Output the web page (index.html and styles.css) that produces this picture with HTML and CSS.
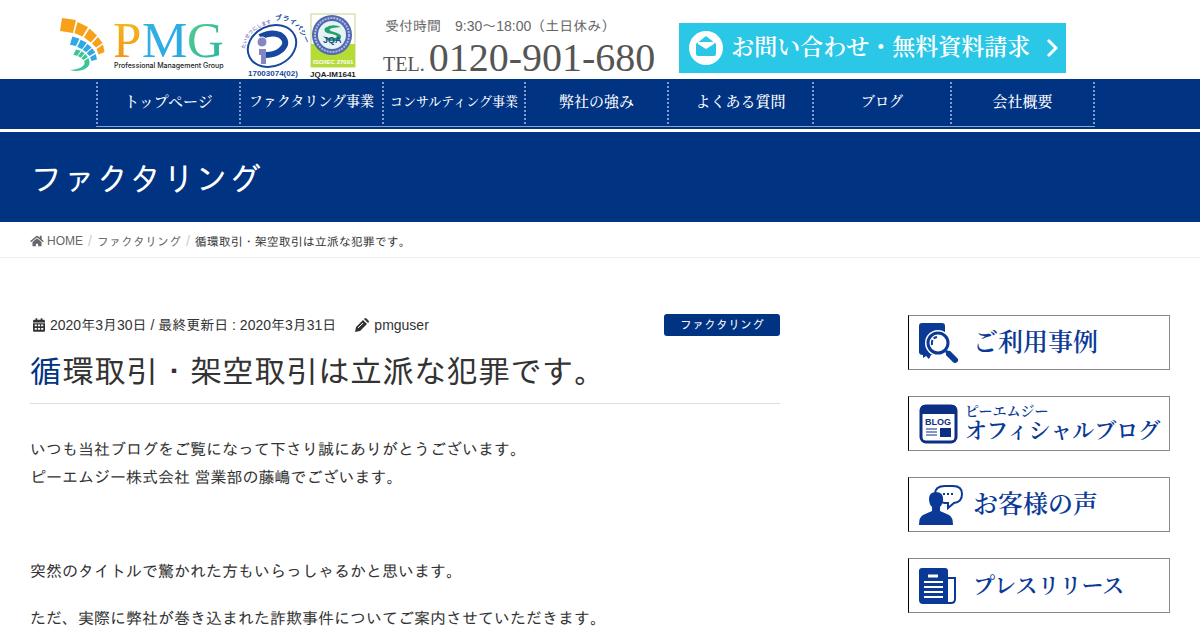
FILE: index.html
```html
<!DOCTYPE html>
<html lang="ja">
<head>
    <meta charset="UTF-8">
    <meta name="viewport" content="width=device-width, initial-scale=1">
    <title>循環取引・架空取引は立派な犯罪です。</title>
    <link rel="stylesheet" href="styles.css">
</head>
<body>
    <header class="site-header">
        <a class="logo" href="#" aria-label="PMG">
            <svg width="168" height="62" viewBox="58 14 168 62">
                <defs>
                    <linearGradient id="pGrad" x1="0" y1="0" x2="0" y2="1">
                        <stop offset="0" stop-color="#f3c21c"/>
                        <stop offset="1" stop-color="#f08c1e"/>
                    </linearGradient>
                    <linearGradient id="mGrad" x1="0" y1="0" x2="1" y2="1">
                        <stop offset="0" stop-color="#35b4e0"/>
                        <stop offset="1" stop-color="#2aa5e6"/>
                    </linearGradient>
                    <linearGradient id="gGrad" x1="0" y1="0" x2="1" y2="1">
                        <stop offset="0" stop-color="#5cd08c"/>
                        <stop offset="1" stop-color="#22b0a8"/>
                    </linearGradient>
                </defs>
                <g fill="#f7a11a">
                    <path d="M62 18L76 20L73 33L60 31Z"/>
                    <path d="M77.500 22L88 27L82.500 36.500L74.500 33Z"/>
                    <path d="M89.500 28.500L97 35.500L90.700 42.500L84 37.300Z"/>
                    <path d="M98 37L102.500 43L96 47.500L92 43.500Z"/>
                    <path d="M103 44.500L104.500 52L98.500 54.500L96.700 49Z"/>
                </g>
                <g fill="#2fa8e4">
                    <path d="M72.300 36.500L79.500 38.700L76 46L70 44.700Z"/>
                    <path d="M80.700 39.700L86.700 42.700L82 49.300L77.300 46.700Z"/>
                    <path d="M87.500 44L91.500 47.500L86 52.300L82.700 49.700Z"/>
                    <path d="M92 48.300L95.300 52.500L89.500 56L86.700 53.200Z"/>
                    <path d="M95.700 54L97 59.500L91.500 61L90 57.300Z"/>
                </g>
                <g fill="#3cc49a">
                    <path d="M76 49.500L80.700 50.700L77.300 55.700L73.300 55Z"/>
                    <path d="M81.700 51.300L84.700 53.300L80.700 57.700L78 56Z"/>
                    <path d="M85.500 54L87.800 57L83.500 60L81.300 58.200Z"/>
                    <path d="M84 61L88.500 58Q92 66 84 69.500Q77 72 70 70Q80 69 83 66Q85.500 63.500 84 61Z"/>
                </g>
                <g class="logo-letters">
                    <text x="113" y="57" fill="url(#pGrad)">P</text>
                    <text x="142" y="57" fill="url(#mGrad)">M</text>
                    <text x="187" y="57" fill="url(#gGrad)">G</text>
                </g>
                <text class="logo-sub" x="114" y="68">Professional Management Group</text>
            </svg>
        </a>

        <svg class="badges" width="118" height="68" viewBox="240 10 118 68">
            <path id="arcLeft" d="M245 49Q247 28 276 22" fill="none"/>
            <path id="arcRight" d="M275 21Q294 16 305 43" fill="none"/>
            <text class="arc-left"><textPath href="#arcLeft">たいせつにします</textPath></text>
            <text class="arc-right"><textPath href="#arcRight">プライバシー</textPath></text>
            <ellipse cx="272" cy="46" rx="25" ry="20" transform="rotate(-25 272 46)" fill="#fff" stroke="#17479e" stroke-width="2"/>
            <path d="M260 37Q271 31 280 35Q290 42 281 50Q275 55 266 55" fill="none" stroke="#17479e" stroke-width="6"/>
            <circle cx="262" cy="42" r="5" fill="#8585c6" stroke="#fff"/>
            <path d="M259 49H266V64H261V55H259Z" fill="#8585c6"/>
            <text class="badge-no" x="248" y="76">17003074(02)</text>

            <rect x="311" y="14" width="44" height="53" fill="#fff" stroke="#c4d68a"/>
            <path d="M311 44H355V67H311Z" fill="#b5dc35"/>
            <circle cx="332" cy="35" r="20" fill="#5068b0"/>
            <circle cx="332" cy="35" r="17" fill="none" stroke="#aebbe0" stroke-width="2" stroke-dasharray="2 1"/>
            <circle cx="332" cy="35" r="14" fill="#e6f3f5"/>
            <path d="M341 27Q332 23 325 28Q322 33 332 34Q340 36 335 38Q330 39 323 36Q329 44 339 40Q345 35 334 32Q326 30 332 28Z" fill="#22a06e"/>
            <text class="jqa" x="323" y="43">JQA</text>
            <text class="iso" x="313" y="64">ISO/IEC 27001</text>
            <text class="jqa-no" x="310" y="77">JQA-IM1641</text>
        </svg>

        <div class="tel">
            <p class="tel-hours">受付時間　9:30〜18:00（土日休み）</p>
            <p class="tel-number"><span>TEL.</span>0120-901-680</p>
        </div>

        <a class="contact" href="#">
            <svg width="34" height="34" viewBox="0 0 34 34">
                <circle cx="17" cy="17" r="17" fill="#fff"/>
                <path d="M7 13L17 5L27 13V23Q27 25 25 25H9Q7 25 7 23Z" fill="#2bc7e6"/>
                <path d="M9 11H25V13L17 18L9 13Z" fill="#fff"/>
            </svg>
            <span>お問い合わせ・無料資料請求</span>
            <svg class="arrow" width="12" height="20" viewBox="0 0 12 20">
                <path d="M2 2L10 10L2 18" fill="none" stroke="#fff" stroke-width="3"/>
            </svg>
        </a>
    </header>

    <nav class="global-nav">
        <ul>
            <li><a href="#">トップページ</a></li>
            <li><a class="medium" href="#">ファクタリング事業</a></li>
            <li><a class="small" href="#">コンサルティング事業</a></li>
            <li><a href="#">弊社の強み</a></li>
            <li><a href="#">よくある質問</a></li>
            <li><a class="medium" href="#">ブログ</a></li>
            <li><a href="#">会社概要</a></li>
        </ul>
    </nav>

    <div class="page-header">ファクタリング</div>

    <ol class="breadcrumb">
        <li>
            <a href="#"><svg width="14" height="12" viewBox="0 0 576 512" fill="currentColor"><path d="M280 148L96 300v164c0 9 7 16 16 16h112c9 0 16-7 16-16v-96h96v96c0 9 7 16 16 16h112c9 0 16-7 16-16V300L296 148a12 12 0 0 0-16 0zM572 251l-84-69V44c0-7-5-12-12-12h-56c-7 0-12 5-12 12v73l-90-74a48 48 0 0 0-61 0L4 251c-5 4-5 12-1 17l25 31c5 5 12 6 17 2L280 107c5-3 11-3 16 0l235 194c5 4 13 3 17-2l26-31c4-5 3-13-2-17z"/></svg>HOME</a>
        </li>
        <li><a href="#">ファクタリング</a></li>
        <li>循環取引・架空取引は立派な犯罪です。</li>
    </ol>

    <div class="container">
        <main>
            <div class="entry-meta">
                <svg width="12" height="14" viewBox="0 0 448 512" fill="currentColor"><path fill-rule="evenodd" d="M0 160V112c0-26 22-48 48-48h48V12c0-7 5-12 12-12h40c7 0 12 5 12 12v52h128V12c0-7 5-12 12-12h40c7 0 12 5 12 12v52h48c26 0 48 22 48 48v48zM0 192h448v272c0 26-22 48-48 48H48c-26 0-48-22-48-48zM64 240v64h80v-64zM184 240v64h80v-64zM304 240v64h80v-64zM64 368v64h80v-64zM184 368v64h80v-64zM304 368v64h80v-64z"/></svg>
                <span class="date">2020年3月30日 / 最終更新日 : 2020年3月31日</span>
                <svg width="14" height="14" viewBox="0 0 14 14" fill="currentColor"><path d="M0 14L1 9L8 2L12 6L5 13ZM9 1L10 0Q11 0 12 1L13 2Q14 3 14 4L13 5Z"/><path d="M3 10L8 5" stroke="#fff"/></svg>
                <span>pmguser</span>
                <a class="category" href="#">ファクタリング</a>
            </div>
            <h1>循環取引・架空取引は立派な犯罪です。</h1>
            <p>いつも当社ブログをご覧になって下さり誠にありがとうございます。<br>ピーエムジー株式会社 営業部の藤嶋でございます。</p>
            <p>&nbsp;</p>
            <p>突然のタイトルで驚かれた方もいらっしゃるかと思います。</p>
            <p>ただ、実際に弊社が巻き込まれた詐欺事件についてご案内させていただきます。</p>
        </main>

        <aside>
            <a class="banner" href="#">
                <svg width="46" height="40" viewBox="0 0 46 40">
                    <path d="M3 0H23Q26 0 26 3V30L12 32L10 36L7 33L4 35V32Q0 32 0 29V3Q0 0 3 0Z" fill="#0a3a96"/>
                    <circle cx="19" cy="20" r="13" fill="#fff"/>
                    <circle cx="19" cy="20" r="10" fill="#fff" stroke="#0a3a96" stroke-width="3"/>
                    <path d="M13 22Q12 15 18 14" fill="none" stroke="#0a3a96" stroke-width="2" stroke-dasharray="5 2"/>
                    <path d="M27 28L30 31" stroke="#0a3a96" stroke-width="3"/>
                    <path d="M30 31L36 37" stroke="#0a3a96" stroke-width="6" stroke-linecap="round"/>
                </svg>
                <span class="banner-text">ご利用事例</span>
            </a>
            <a class="banner" href="#">
                <svg width="38" height="40" viewBox="0 0 38 40">
                    <rect x="2" y="2" width="35" height="36" rx="5" fill="#fff" stroke="#0a2f84" stroke-width="3"/>
                    <path d="M1 10V6Q1 1 6 1H33Q38 1 38 6V10Z" fill="#0a2f84"/>
                    <text class="blog-label" x="6" y="21">BLOG</text>
                    <path d="M7 25H18M7 28H18M7 31H18" stroke="#0a2f84" stroke-width="1"/>
                    <rect x="21" y="24" width="11" height="9" fill="#0a2f84"/>
                </svg>
                <span class="banner-text blog"><small>ピーエムジー</small>オフィシャルブログ</span>
            </a>
            <a class="banner" href="#">
                <svg width="46" height="40" viewBox="0 0 46 40">
                    <path d="M26 1H34Q43 1 43 9Q43 17 35 18L29 23V18H26Q16 17 16 9Q16 1 26 1Z" fill="#fff" stroke="#0a3a96" stroke-width="2"/>
                    <path d="M24 9H36" stroke="#0a3a96" stroke-width="2" stroke-dasharray="2 2"/>
                    <path d="M17 7Q25 7 24 16Q23 20 21 22V26L30 30Q34 32 34 40H0Q0 32 4 30L13 26V22Q10 19 10 14Q10 7 17 7Z" fill="#0a3a96"/>
                </svg>
                <span class="banner-text">お客様の声</span>
            </a>
            <a class="banner" href="#">
                <svg width="46" height="38" viewBox="0 0 46 38">
                    <path d="M27 11H36V32Q36 36 32 36H24" fill="#fff" stroke="#0a3a96" stroke-width="2"/>
                    <path d="M3 1H26Q29 1 29 4V34Q29 37 32 37H4Q0 37 0 33V4Q0 1 3 1Z" fill="#0a3a96"/>
                    <path d="M9 9H19" stroke="#fff" stroke-width="3"/>
                    <path d="M5 15H24M5 20H24M5 25H24M5 30H24" stroke="#fff" stroke-width="2"/>
                </svg>
                <span class="banner-text press">プレスリリース</span>
            </a>
        </aside>
    </div>
</body>
</html>
```
FILE: styles.css
```css
* {
    box-sizing: border-box;
}

body {
    margin: 0;
    font-family: "Liberation Sans", IPAGothic, "Noto Sans CJK JP", sans-serif;
    font-size: 16px;
    line-height: 28px;
    color: #333;
    background: #fff;
}

a {
    color: inherit;
    text-decoration: none;
}

svg {
    flex-shrink: 0;
    overflow: visible;
}

/* header */
.site-header {
    display: flex;
    align-items: flex-end;
    padding: 10px 58px 0;
}

.logo {
    display: flex;
    margin: 0 14px 3px 0;
}

.logo-letters {
    font: 51px "Liberation Serif", serif;
}

.logo-sub {
    font: 500 7px Inter, sans-serif;
    fill: #222;
}

.badges {
    margin: 0 25px 1px 0;
}

.arc-left {
    font-size: 5px;
    font-weight: 700;
    fill: #8a7fc4;
}

.arc-right {
    font-size: 7px;
    font-weight: 700;
    fill: #17479e;
}

.badge-no {
    font-size: 8px;
    font-weight: 700;
    fill: #17479e;
}

.jqa {
    font-size: 9px;
    font-weight: 700;
    fill: #27468f;
}

.iso {
    font-size: 6px;
    font-weight: 700;
    fill: #fff;
}

.jqa-no {
    font-size: 8px;
    font-weight: 700;
    fill: #222;
}

.tel {
    color: #555;
    white-space: nowrap;
}

.tel p {
    margin: 0;
}

.tel-hours {
    padding-left: 2px;
    font-size: 14px;
    line-height: 22px;
    color: #666;
}

.tel-number {
    font-family: "Liberation Serif", serif;
    font-size: 40px;
    line-height: 42px;
}

.tel-number span {
    margin-right: 4px;
    font-size: 20px;
    line-height: 20px;
}

.contact {
    display: flex;
    align-items: center;
    gap: 8px;
    width: 387px;
    height: 50px;
    margin: 0 0 6px 24px;
    padding: 0 8px 0 10px;
    font-family: "Liberation Serif", "Noto Serif CJK JP", "Noto Sans CJK JP", serif;
    font-size: 23px;
    font-weight: 600;
    white-space: nowrap;
    color: #fff;
    background: #2bc7e6;
}

.contact .arrow {
    margin-left: auto;
}

/* navigation */
.global-nav {
    padding: 3px 105px 2px 96px;
    background: #003382;
}

.global-nav ul {
    display: grid;
    grid-template-columns: 143fr 143fr 142fr 143fr 145fr 138fr 145fr;
    margin: 0;
    padding: 0 0 2px;
    list-style: none;
    border-bottom: 1px solid #8ba6d0;
}

.global-nav li {
    border-left: 2px dotted #7f9bcb;
}

.global-nav li:last-child {
    border-right: 2px dotted #7f9bcb;
}

.global-nav a {
    display: block;
    font-family: "Liberation Serif", "Noto Serif CJK JP", "Noto Sans CJK JP", serif;
    font-size: 15px;
    font-weight: 500;
    line-height: 40px;
    padding-bottom: 2px;
    text-align: center;
    white-space: nowrap;
    color: #fff;
}

.global-nav .medium {
    font-size: 14px;
}

.global-nav .small {
    font-size: 13px;
}

.page-header {
    margin-top: 3px;
    padding: 23px 30px 17px;
    font-size: 33px;
    line-height: 50px;
    color: #fff;
    background: #003382;
}

/* breadcrumb */
.breadcrumb {
    display: flex;
    margin: 0;
    padding: 5px 30px 2px;
    list-style: none;
    font-size: 12px;
    border-bottom: 1px solid #eee;
}

.breadcrumb li {
    height: 28px;
}

.breadcrumb a {
    color: #666;
}

.breadcrumb svg {
    margin-right: 3px;
    vertical-align: -2px;
}

.breadcrumb li + li::before {
    content: "/";
    padding: 0 5px;
    font-size: 14px;
    color: #ccc;
}

/* content */
.container {
    display: grid;
    grid-template-columns: minmax(0, 1fr) 262px;
    gap: 128px;
    padding: 56px 30px 0;
}

.entry-meta {
    display: flex;
    align-items: center;
    gap: 5px;
    padding-left: 3px;
    font-size: 14px;
    line-height: 22px;
}

.date {
    margin-right: 14px;
}

.category {
    margin-left: auto;
    padding: 0 16px;
    font-size: 12px;
    color: #fff;
    background: #003382;
    border-radius: 3px;
}

h1 {
    margin: 12px 0 32px;
    padding-bottom: 7px;
    font-size: 32px;
    font-weight: 400;
    line-height: 48px;
    border-bottom: 1px solid #ddd;
}

h1::first-letter {
    color: #003382;
}

main p {
    margin: 0 0 19px;
}

/* sidebar */
aside {
    display: flex;
    flex-direction: column;
    gap: 26px;
    padding-top: 1px;
}

.banner {
    display: flex;
    align-items: center;
    height: 55px;
    padding-left: 10px;
    border: 1px solid #888;
    border-left-color: #000;
}

.banner-text {
    margin-left: 8px;
    font-family: "Liberation Serif", "Noto Serif CJK JP", "Noto Sans CJK JP", serif;
    font-size: 25px;
    font-weight: 600;
    white-space: nowrap;
    color: #0a3a96;
}

.banner-text small {
    display: block;
    font-size: 14px;
    line-height: 14px;
}

.banner-text.blog,
.banner-text.press {
    font-size: 22px;
}

.banner-text.blog {
    line-height: 24px;
}

.blog-label {
    font: 700 9px "Liberation Sans", sans-serif;
    fill: #0a2f84;
}
```
